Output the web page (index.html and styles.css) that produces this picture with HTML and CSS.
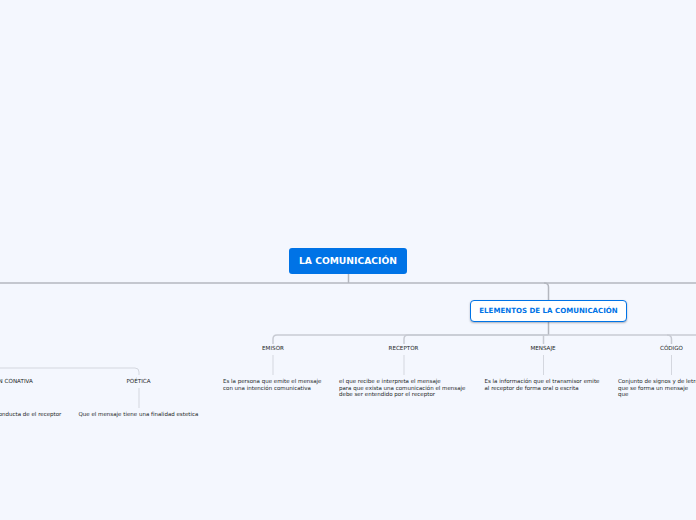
FILE: index.html
```html
<!DOCTYPE html>
<html lang="es">
<head>
<meta charset="utf-8">
<title>La comunicación</title>
<link rel="stylesheet" href="styles.css">
</head>
<body>
<main class="canvas">
<svg class="links" width="696" height="520" viewBox="0 0 696 520" fill="none">
  <g class="l1">
    <path d="M348.5 274V283"/>
    <path d="M0 283H696"/>
    <path d="M544 283Q548.500 283 548.500 287V301"/>
    <path d="M548.500 321V335"/>
  </g>
  <g class="l2">
    <path d="M548.500 335H277Q273 335 273 339V344"/>
    <path d="M548.500 335H408Q404 335 404 339V344"/>
    <path d="M548.500 335H667Q671.500 335 671.500 339V344"/>
    <path d="M543.500 335V344"/>
    <path d="M696 335H667"/>
  </g>
  <g class="l3">
    <path d="M273 355V375"/>
    <path d="M404 355V375"/>
    <path d="M543.500 355V375"/>
    <path d="M671.500 355V375"/>
    <path d="M0 368H135Q139 368 139 372V375"/>
    <path d="M139 388V408"/>
  </g>
</svg>

<h1 class="node root">LA COMUNICACIÓN</h1>
<h2 class="node branch">ELEMENTOS DE LA COMUNICACIÓN</h2>

<span class="node label" style="left:273px;top:345px">EMISOR</span>
<span class="node label" style="left:403.500px;top:345px">RECEPTOR</span>
<span class="node label" style="left:543px;top:345px">MENSAJE</span>
<span class="node label" style="left:671.500px;top:345px">CÓDIGO</span>
<span class="node label" style="left:5px;top:378px">FUNCIÓN CONATIVA</span>
<span class="node label" style="left:138.500px;top:378px">POÉTICA</span>

<p class="node text" style="left:223px;top:378px">Es la persona que emite el mensaje<br>con una intención comunicativa</p>
<p class="node text" style="left:339px;top:378px">el que recibe e interpreta el mensaje<br>para que exista una comunicación el mensaje<br>debe ser entendido por el receptor</p>
<p class="node text" style="left:484.500px;top:378px">Es la información que el transmisor emite<br>al receptor de forma oral o escrita</p>
<p class="node text" style="left:618px;top:378px">Conjunto de signos y de letras<br>que se forma un mensaje<br>que</p>
<p class="node text" style="left:-40px;top:411px">Influye en la conducta de el receptor</p>
<p class="node text" style="left:78.500px;top:411px">Que el mensaje tiene una finalidad estetica</p>
</main>
</body>
</html>
```
FILE: styles.css
```css
html, body {
  margin: 0;
  padding: 0;
  background: #f4f7fe;
}
.canvas {
  position: relative;
  width: 696px;
  height: 520px;
  overflow: hidden;
  background: #f4f7fe;
  font-family: "DejaVu Sans", Verdana, sans-serif;
}
.links {
  position: absolute;
  left: 0;
  top: 0;
}
.l1 path { stroke: #b4b7bf; stroke-width: 1.5; }
.l2 path { stroke: #c8cbd3; stroke-width: 1.5; }
.l3 path { stroke: #d4d7df; stroke-width: 1; }
.node {
  position: absolute;
  margin: 0;
  white-space: nowrap;
  box-sizing: border-box;
}
.root {
  left: 289px;
  top: 248px;
  width: 118px;
  height: 26px;
  padding-bottom: 1px;
  display: flex;
  align-items: center;
  justify-content: center;
  background: #0073e6;
  border-radius: 3px;
  color: #fff;
  font-size: 9.200px;
  font-weight: 700;
}
.branch {
  left: 470px;
  top: 300px;
  width: 157px;
  height: 22px;
  padding-bottom: 2px;
  display: flex;
  align-items: center;
  justify-content: center;
  background: #fff;
  border: 1.500px solid #0073e6;
  border-radius: 4px;
  box-shadow: 0 1px 2px rgba(60, 70, 90, .4);
  color: #0073e6;
  font-size: 7.050px;
  font-weight: 700;
}
.label {
  transform: translateX(-50%);
  color: #1c1f26;
  font-size: 5.600px;
  line-height: 7px;
}
.text {
  color: #1c1f26;
  font-size: 5.500px;
  line-height: 6.500px;
}
```
